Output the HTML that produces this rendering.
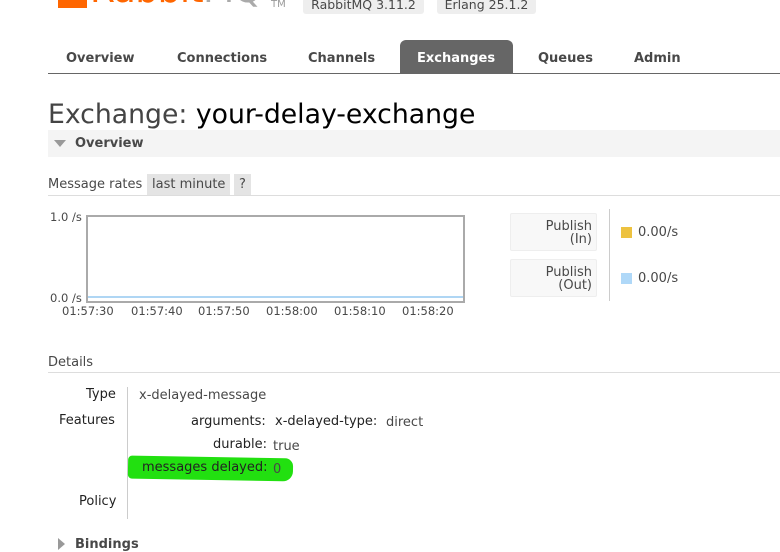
<!DOCTYPE html>
<html><head><meta charset="utf-8"><style>
body{margin:0;width:780px;height:544px;overflow:hidden;background:#fff;font-family:"DejaVu Sans","Liberation Sans",sans-serif;color:#484848;position:relative}
.a{position:absolute;white-space:nowrap}
.nav{font-size:13px;font-weight:bold;color:#484848;top:51px}
.badge{background:#eee;border-radius:3px;font-size:12.5px;height:16px;line-height:13px;top:-2px;text-align:center}
.lbl{font-size:13px}
</style></head><body>
<div class="a" style="left:58px;top:-13px;width:29px;height:21px;background:#f60"></div>
<div class="a" style="left:90px;top:-27px;font-size:36px;color:#f60;line-height:36px;letter-spacing:-0.5px">Rabbit<span style="color:#aaa">MQ</span></div>
<div class="a" style="left:271px;top:-1px;font-size:10px;color:#999">TM</div>
<div class="a badge" style="left:303px;width:121px">RabbitMQ 3.11.2</div>
<div class="a badge" style="left:437px;width:99px">Erlang 25.1.2</div>

<div class="a" style="left:48px;top:73px;width:732px;height:1px;background:#666"></div>
<div class="a" style="left:400px;top:40px;width:113px;height:34px;background:#666;border-radius:6px 6px 0 0"></div>
<div class="a nav" style="left:66px">Overview</div>
<div class="a nav" style="left:177px">Connections</div>
<div class="a nav" style="left:308px">Channels</div>
<div class="a nav" style="left:417px;color:#fff">Exchanges</div>
<div class="a nav" style="left:538px">Queues</div>
<div class="a nav" style="left:634px">Admin</div>

<div class="a" style="left:48px;top:99px;font-size:26.7px;color:#444;line-height:32px">Exchange: <span style="color:#000">your-delay-exchange</span></div>
<div class="a" style="left:48px;top:130px;width:732px;height:27px;background:#f4f4f4"></div>
<div class="a" style="left:54px;top:140px;width:0;height:0;border-left:6px solid transparent;border-right:6px solid transparent;border-top:7px solid #999"></div>
<div class="a" style="left:75px;top:136px;font-size:13px;font-weight:bold;color:#484848">Overview</div>

<div class="a lbl" style="left:48px;top:177px">Message rates</div>
<div class="a lbl" style="left:147px;top:174px;background:#e4e4e4;padding:3px 5px;height:15px">last minute</div>
<div class="a lbl" style="left:234px;top:174px;background:#e4e4e4;padding:3px 5px;height:15px">?</div>
<div class="a" style="left:48px;top:195px;width:732px;height:1px;background:#ddd"></div>

<div class="a" style="left:50px;top:210px;font-size:11.5px">1.0 /s</div>
<div class="a" style="left:50px;top:291px;font-size:11.5px">0.0 /s</div>
<div class="a" style="left:86px;top:215px;width:375px;height:84px;border:2px solid #aaa;background:#fff"></div>
<div class="a" style="left:88px;top:296px;width:375px;height:2px;background:#afd6f4"></div>
<div class="a" style="left:62px;top:304px;font-size:11.5px">01:57:30</div>
<div class="a" style="left:131px;top:304px;font-size:11.5px">01:57:40</div>
<div class="a" style="left:198px;top:304px;font-size:11.5px">01:57:50</div>
<div class="a" style="left:266px;top:304px;font-size:11.5px">01:58:00</div>
<div class="a" style="left:334px;top:304px;font-size:11.5px">01:58:10</div>
<div class="a" style="left:402px;top:304px;font-size:11.5px">01:58:20</div>

<div class="a lbl" style="left:510px;top:213px;width:85px;height:36px;background:#f8f8f8;border:1px solid #eee;border-radius:2px;text-align:right;line-height:13px"><div style="padding:6px 4px 0 0">Publish<br>(In)</div></div>
<div class="a lbl" style="left:510px;top:259px;width:85px;height:36px;background:#f8f8f8;border:1px solid #eee;border-radius:2px;text-align:right;line-height:13px"><div style="padding:6px 4px 0 0">Publish<br>(Out)</div></div>
<div class="a" style="left:609px;top:209px;width:1px;height:92px;background:#ccc"></div>
<div class="a" style="left:621px;top:227px;width:11px;height:11px;background:#edc240"></div>
<div class="a lbl" style="left:638px;top:225px">0.00/s</div>
<div class="a" style="left:621px;top:273px;width:11px;height:11px;background:#afd8f8"></div>
<div class="a lbl" style="left:638px;top:271px">0.00/s</div>

<div class="a lbl" style="left:48px;top:355px">Details</div>
<div class="a" style="left:48px;top:372px;width:732px;height:1px;background:#ddd"></div>
<div class="a" style="left:127px;top:387px;width:1px;height:132px;background:#ccc"></div>
<div class="a lbl" style="left:86px;top:387px;color:#222">Type</div>
<div class="a lbl" style="left:139px;top:388px">x-delayed-message</div>
<div class="a lbl" style="left:59px;top:413px;color:#222">Features</div>
<div class="a lbl" style="left:191px;top:414px;color:#222">arguments:</div>
<div class="a lbl" style="left:275px;top:414px;color:#222">x-delayed-type:</div>
<div class="a lbl" style="left:386px;top:415px">direct</div>
<div class="a lbl" style="left:213px;top:437px;color:#222">durable:</div>
<div class="a lbl" style="left:273px;top:439px">true</div>
<div class="a" style="left:128px;top:457px;width:165px;height:23px;background:#22e010;border-radius:4px 8px 10px 4px;transform:rotate(1deg)"></div>
<div class="a lbl" style="left:142px;top:460px;color:#222">messages delayed:</div>
<div class="a lbl" style="left:273px;top:462px">0</div>
<div class="a lbl" style="left:79px;top:494px;color:#222">Policy</div>
<div class="a" style="left:58px;top:538px;width:0;height:0;border-top:6px solid transparent;border-bottom:6px solid transparent;border-left:7px solid #999"></div>
<div class="a" style="left:75px;top:537px;font-size:13px;font-weight:bold">Bindings</div>
</body></html>
